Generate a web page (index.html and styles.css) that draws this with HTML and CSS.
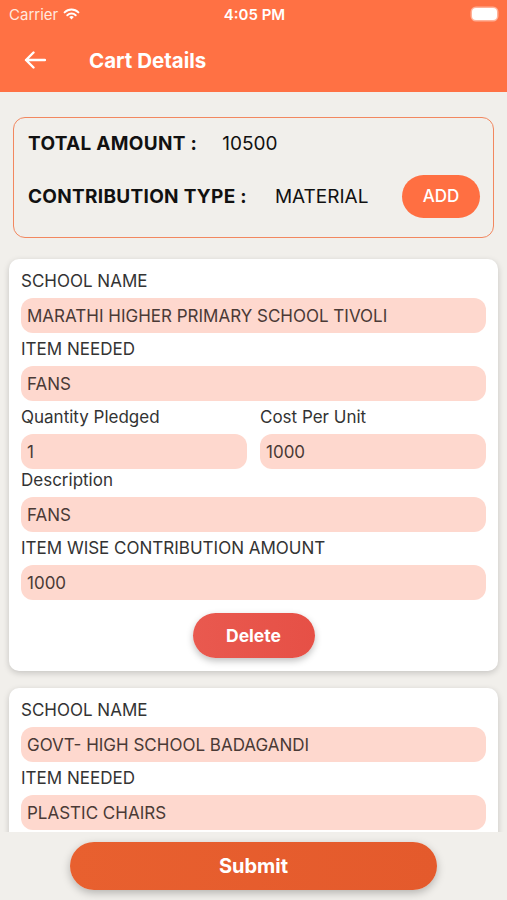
FILE: index.html
```html
<!DOCTYPE html>
<html lang="en">
<head>
    <meta charset="UTF-8">
    <meta name="viewport" content="width=device-width, initial-scale=1.0">
    <title>Cart Details</title>
    <link rel="stylesheet" href="styles.css">
</head>
<body>
    <header class="top">
        <div class="status">
            <span class="carrier">Carrier
                <svg class="wifi" width="17" height="12" viewBox="0 0 17 12">
                    <path d="M8.5 11.5 L6.2 9.1 A3.3 3.3 0 0 1 10.8 9.1 Z" fill="#fff"/>
                    <path d="M4.3 7.2 A6 6 0 0 1 12.7 7.2" stroke="#fff" stroke-width="2" fill="none" stroke-linecap="round"/>
                    <path d="M1.6 4.4 A9.8 9.8 0 0 1 15.4 4.4" stroke="#fff" stroke-width="2" fill="none" stroke-linecap="round"/>
                </svg>
            </span>
            <span class="time">4:05 PM</span>
            <span class="battery"><span class="level"></span></span>
        </div>
        <div class="appbar">
            <svg class="back" width="22" height="18" viewBox="0 0 22 18">
                <path d="M21 9 H2 M9.5 1.5 L2 9 L9.5 16.5" stroke="#fff" stroke-width="2.4" fill="none" stroke-linecap="round" stroke-linejoin="round"/>
            </svg>
            <h1>Cart Details</h1>
        </div>
    </header>

    <main class="scroll">
        <section class="summary">
            <div class="sum-row">
                <span class="sum-label">TOTAL AMOUNT :</span>
                <span class="sum-value total">10500</span>
            </div>
            <div class="sum-row">
                <span class="sum-label">CONTRIBUTION TYPE :</span>
                <span class="sum-value type">MATERIAL</span>
                <button class="add-btn">ADD</button>
            </div>
        </section>

        <div class="card">
            <label>SCHOOL NAME</label>
            <div class="field">MARATHI HIGHER PRIMARY SCHOOL TIVOLI</div>
            <label>ITEM NEEDED</label>
            <div class="field">FANS</div>
            <div class="pair">
                <div>
                    <label>Quantity Pledged</label>
                    <div class="field">1</div>
                </div>
                <div>
                    <label>Cost Per Unit</label>
                    <div class="field">1000</div>
                </div>
            </div>
            <label>Description</label>
            <div class="field">FANS</div>
            <label>ITEM WISE CONTRIBUTION AMOUNT</label>
            <div class="field">1000</div>
            <button class="delete-btn">Delete</button>
        </div>

        <!-- second item, cut off by the scroll area -->
        <div class="card">
            <label>SCHOOL NAME</label>
            <div class="field">GOVT- HIGH SCHOOL BADAGANDI</div>
            <label>ITEM NEEDED</label>
            <div class="field">PLASTIC CHAIRS</div>
        </div>
    </main>

    <footer class="bottom">
        <button class="submit-btn">Submit</button>
    </footer>
</body>
</html>
```
FILE: styles.css
```css
/* Cart details page */
* {
    box-sizing: border-box;
}

body {
    font-family: Inter, "Liberation Sans", Arial, sans-serif;
    margin: 0;
    padding: 0;
    width: 507px;
    height: 900px;
    overflow: hidden;
    background-color: #f1efeb;
    display: flex;
    flex-direction: column;
}

.top {
    background-color: #ff7144;
    color: #ffffff;
    height: 92px;
    flex-shrink: 0;
}

.status {
    height: 28px;
    display: flex;
    align-items: center;
    justify-content: space-between;
    padding: 0 7px 0 9px;
    font-size: 15px;
}

.carrier {
    display: flex;
    align-items: center;
    gap: 5px;
    width: 120px;
    color: #ffe9df;
}

.time {
    font-weight: 600;
}

.battery {
    width: 120px;
    display: flex;
    justify-content: flex-end;
    padding-right: 3px;
}

.level {
    width: 25px;
    height: 12px;
    border-radius: 4px;
    background-color: #ffffff;
    box-shadow: 0 0 0 1.5px rgba(255, 255, 255, 0.45);
}

.appbar {
    height: 64px;
    display: flex;
    align-items: center;
    padding: 0 0 0 24px;
    gap: 43px;
}

.appbar h1 {
    margin: 0;
    font-size: 20.5px;
    font-weight: 700;
}

.scroll {
    height: 740px;
    flex-shrink: 0;
    overflow: hidden;
    padding-top: 25px;
}

.summary {
    margin: 0 13px 21px;
    height: 121px;
    border: 1.5px solid #f2875f;
    border-radius: 12px;
    padding: 10px 13px 0 14px;
}

.sum-row {
    display: flex;
    align-items: center;
    height: 30px;
    font-size: 19px;
    color: #111111;
}

.sum-row + .sum-row {
    margin-top: 9px;
    height: 58px;
}

.sum-label {
    font-weight: 700;
    letter-spacing: 0.3px;
}

.total {
    margin-left: 25px;
}

.type {
    margin-left: 28px;
}

.add-btn {
    margin-left: auto;
    width: 78px;
    height: 43px;
    border: none;
    border-radius: 22px;
    background-color: #ff6f42;
    color: #ffffff;
    font-family: inherit;
    font-size: 17px;
    font-weight: 500;
}

.card {
    margin: 0 9px 17px;
    background-color: #ffffff;
    border-radius: 10px;
    padding: 12px 12px 13px;
    box-shadow: 0 2px 6px rgba(0, 0, 0, 0.18);
    display: flex;
    flex-direction: column;
}

.card label {
    display: block;
    font-size: 17px;
    line-height: 20px;
    color: #333333;
    margin-bottom: 7px;
}

.field {
    height: 35px;
    border-radius: 12px;
    background-color: #fed8ce;
    color: #4a3a36;
    font-size: 17px;
    display: flex;
    align-items: center;
    padding-left: 6px;
    margin-bottom: 6px;
}

.pair {
    display: grid;
    grid-template-columns: 1fr 1fr;
    gap: 13px;
    margin-bottom: 1px;
}

.pair .field {
    margin-bottom: 0;
}

.delete-btn {
    align-self: center;
    margin-top: 7px;
    width: 122px;
    height: 45px;
    border: none;
    border-radius: 23px;
    background: linear-gradient(90deg, #e9594f, #e65046);
    color: #ffffff;
    font-family: inherit;
    font-size: 17.5px;
    font-weight: 700;
    box-shadow: 0 3px 7px rgba(0, 0, 0, 0.25);
}

.bottom {
    flex: 1;
    display: flex;
    justify-content: center;
    padding-top: 10px;
}

.submit-btn {
    width: 367px;
    height: 48px;
    border: none;
    border-radius: 24px;
    background: linear-gradient(90deg, #e8602f, #e45a2c);
    color: #ffffff;
    font-family: inherit;
    font-size: 20px;
    font-weight: 700;
    box-shadow: 0 3px 8px rgba(0, 0, 0, 0.25);
}
```
